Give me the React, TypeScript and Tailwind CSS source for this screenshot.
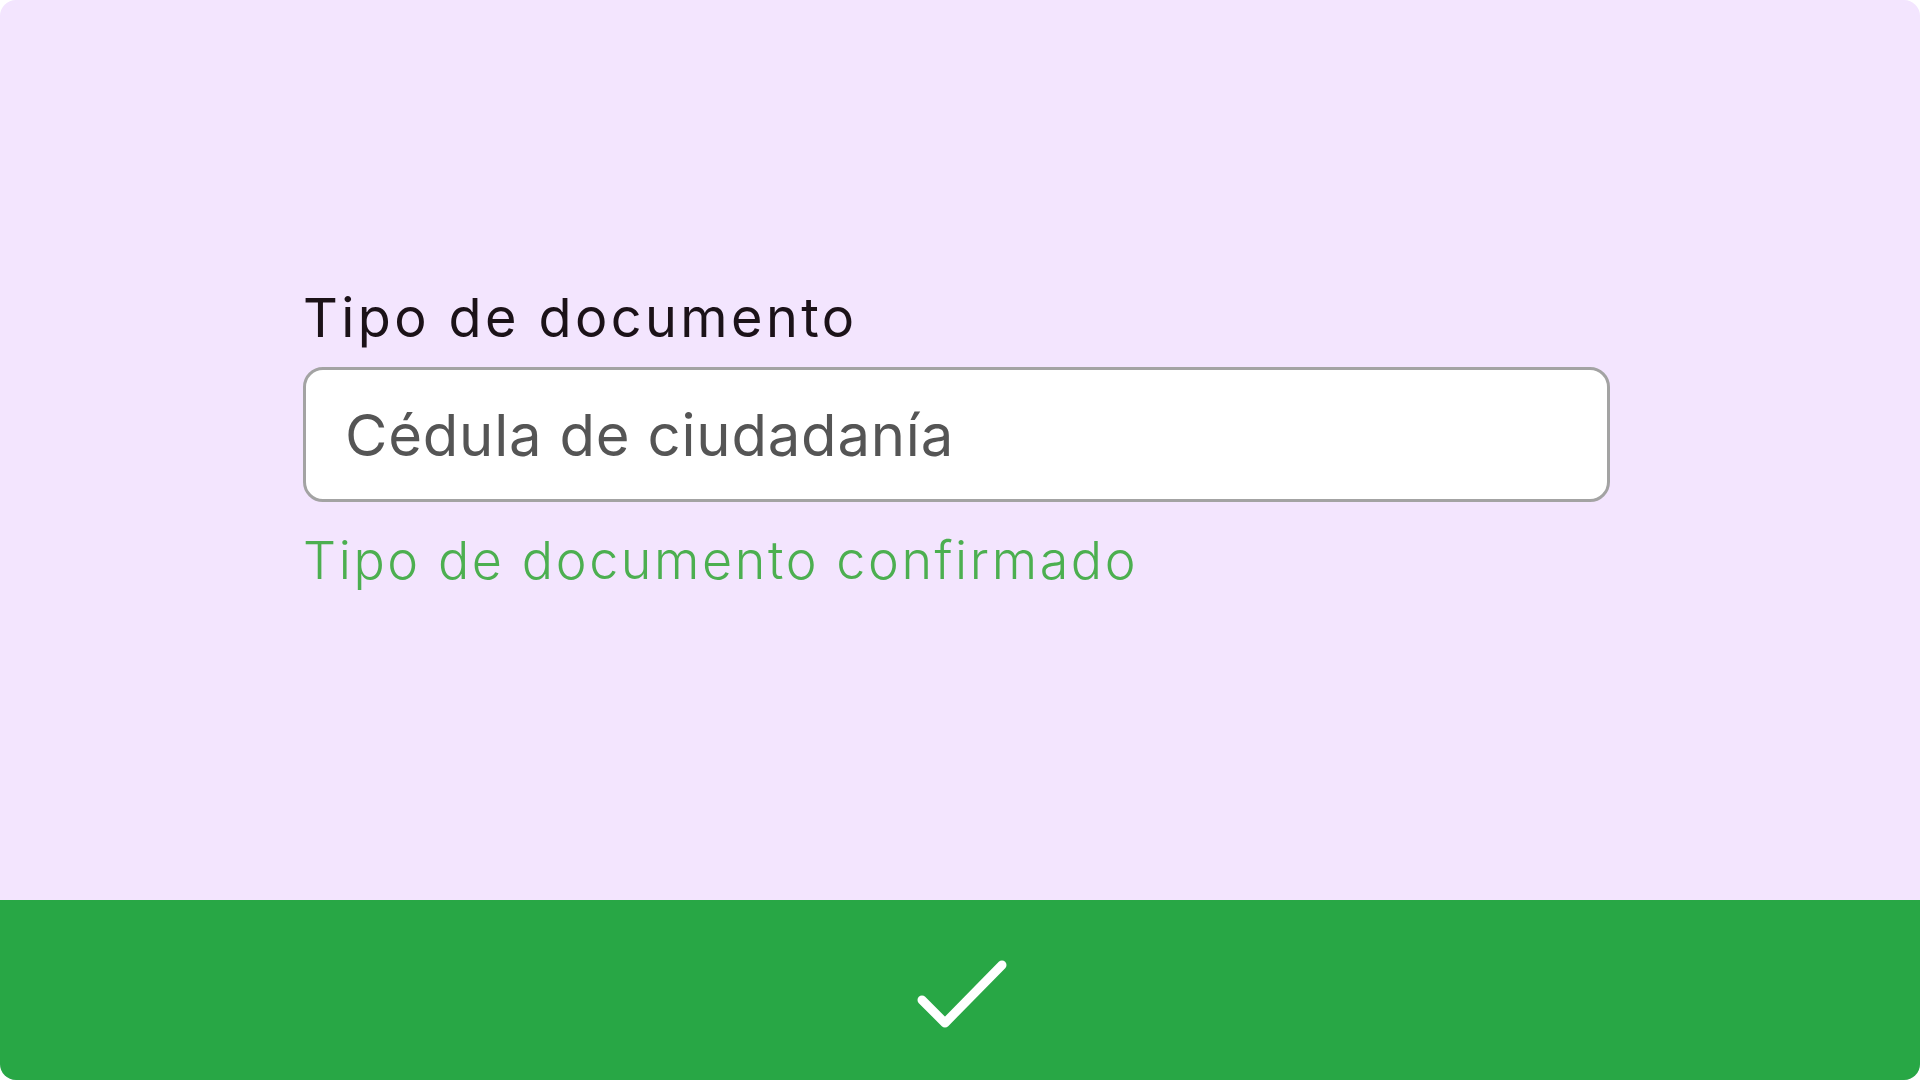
export default function App() {
  return (
    <div className="h-screen w-full bg-white">
      <div className="flex h-full w-full flex-col overflow-hidden rounded-2xl bg-[#f3e5fe] font-['Inter',sans-serif]">
        <div className="flex-1 pl-[303px] pt-[286px]">
          <div className="text-[54px] leading-[64px] tracking-[3.4px] text-[#1b1218]">
            Tipo de documento
          </div>
          <div className="mt-[17px] flex h-[135px] w-[1307px] items-center rounded-[20px] border-[3px] border-[#a3a3a3] bg-white pl-[39px]">
            <span className="text-[58px] leading-none tracking-[0.8px] text-[#555555]">Cédula de ciudadanía</span>
          </div>
          <div className="mt-[27px] text-[52px] font-light leading-[64px] tracking-[2.6px] text-[#4caf50]">
            Tipo de documento confirmado
          </div>
        </div>
        <div className="flex h-[180px] items-center justify-center bg-[#28a745]">
          <svg className="ml-[4px] mt-[8px]" width="100" height="80" viewBox="0 0 100 80" fill="none">
            <path
              d="M10 46 L33 69 L90 11"
              stroke="white"
              strokeWidth="9"
              strokeLinecap="round"
              strokeLinejoin="round"
            />
          </svg>
        </div>
      </div>
    </div>
  );
}
